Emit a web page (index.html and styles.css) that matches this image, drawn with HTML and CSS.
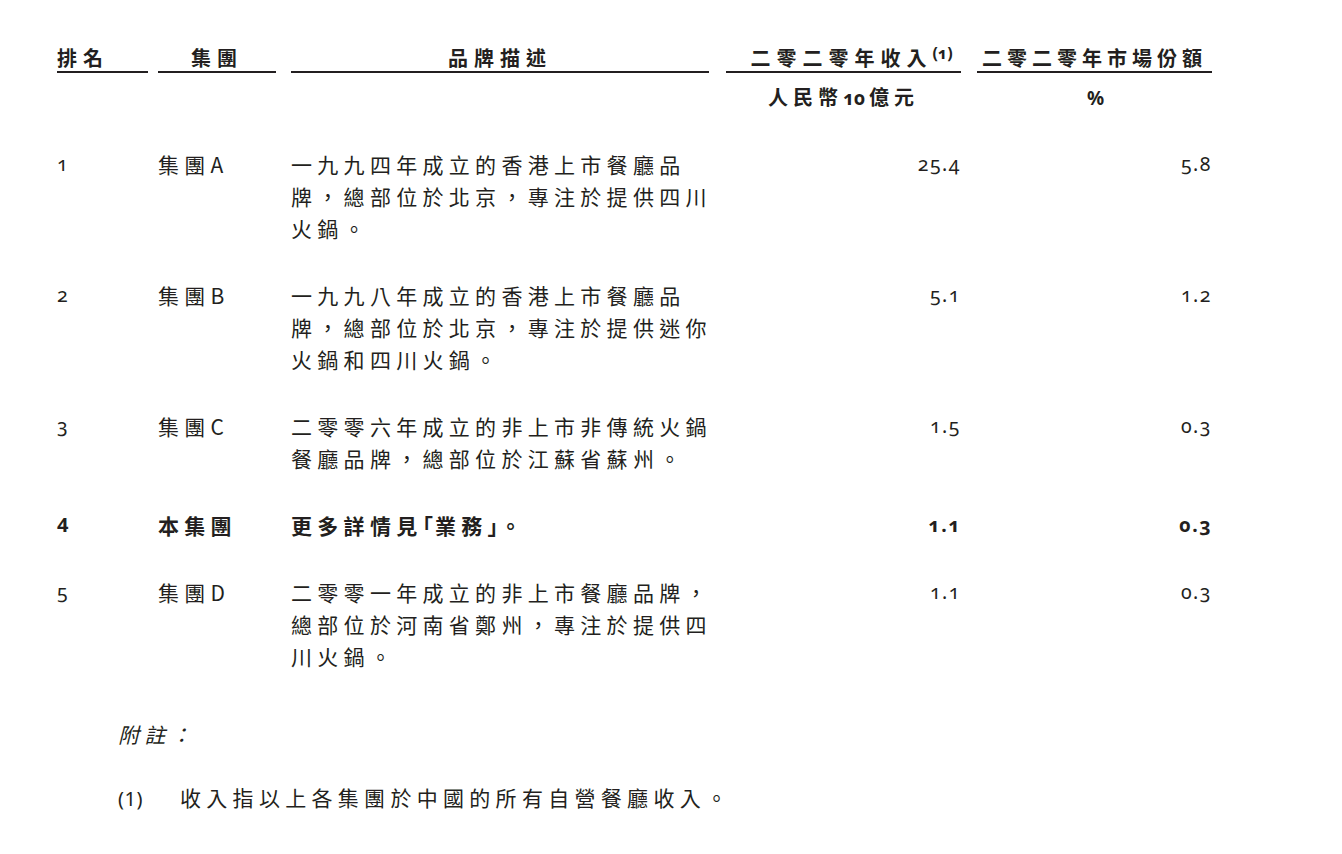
FILE: index.html
```html
<!DOCTYPE html>
<html lang="zh-Hant">
<head>
<meta charset="utf-8">
<title>市場份額</title>
<link rel="stylesheet" href="styles.css">
</head>
<body>
<div class="page">
  <div class="row head">
    <div class="hcell left r-rank"><span class="ul">排名</span></div>
    <div class="hcell r-group"><span class="ul">集團</span></div>
    <div class="hcell r-desc"><span class="ul">品牌描述</span></div>
    <div class="hcell r-rev"><span class="ul">二零二零年收入<sup class="sup">(1)</sup></span></div>
    <div class="hcell r-share"><span class="ul">二零二零年市場份額</span></div>
  </div>
  <div class="row sub">
    <div></div><div></div><div></div>
    <div class="hcell r-rev">人民幣<span class="num">10</span>億元</div>
    <div class="hcell r-share"><span class="num">%</span></div>
  </div>

  <div class="body">
    <div class="row item">
      <div class="num rank">1</div>
      <div class="cjk">集團A</div>
      <div class="cjk">一九九四年成立的香港上市餐廳品<br>牌，總部位於北京，專注於提供四川<br>火鍋。</div>
      <div class="num val">25.4</div>
      <div class="num val">5.8</div>
    </div>
    <div class="row item">
      <div class="num rank">2</div>
      <div class="cjk">集團B</div>
      <div class="cjk">一九九八年成立的香港上市餐廳品<br>牌，總部位於北京，專注於提供迷你<br>火鍋和四川火鍋。</div>
      <div class="num val">5.1</div>
      <div class="num val">1.2</div>
    </div>
    <div class="row item">
      <div class="num rank">3</div>
      <div class="cjk">集團C</div>
      <div class="cjk">二零零六年成立的非上市非傳統火鍋<br>餐廳品牌，總部位於江蘇省蘇州。</div>
      <div class="num val">1.5</div>
      <div class="num val">0.3</div>
    </div>
    <div class="row item bold">
      <div class="num rank">4</div>
      <div class="cjk">本集團</div>
      <div class="cjk">更多詳情見<span class="br">「</span>業務<span class="br">」</span>。</div>
      <div class="num val">1.1</div>
      <div class="num val">0.3</div>
    </div>
    <div class="row item">
      <div class="num rank">5</div>
      <div class="cjk">集團D</div>
      <div class="cjk">二零零一年成立的非上市餐廳品牌，<br>總部位於河南省鄭州，專注於提供四<br>川火鍋。</div>
      <div class="num val">1.1</div>
      <div class="num val">0.3</div>
    </div>
  </div>

  <div class="notes">
    <div class="note-title">附註：</div>
    <div class="note"><span class="note-no num">(1)</span><span class="cjk">收入指以上各集團於中國的所有自營餐廳收入。</span></div>
  </div>
</div>
</body>
</html>
```
FILE: styles.css
```css
html, body {
  margin: 0;
  padding: 0;
  background: #ffffff;
}
body {
  color: #231f20;
  font-family: "Noto Sans CJK TC", "Noto Sans CJK SC", sans-serif;
}
.page {
  padding: 45px 0 0 57px;
}
.row {
  display: grid;
  grid-template-columns: 101px 133px 435px 251px 235px;
  align-items: start;
}
.hcell {
  font-weight: 700;
  font-size: 20px;
  line-height: 26px;
  letter-spacing: 6px;
  text-align: center;
  white-space: nowrap;
}
.hcell.left { text-align: left; }
.head .hcell {
  border-bottom: 2px solid #231f20;
}
.head .r-rank { margin-right: 10px; }
.head .r-group { margin-right: 15px; }
.head .r-desc { margin-right: 17px; }
.head .r-rev { margin-right: 16px; padding-left: 16px; }
.head .r-share { letter-spacing: 5px; }
.ul { display: inline-block; }
.sup {
  font-family: "Noto Sans", sans-serif;
  font-variant-numeric: oldstyle-nums;
  font-size: 16px;
  letter-spacing: 0;
  vertical-align: 7px;
  line-height: 0;
}
.sub {
  margin-top: 8px;
}
.sub .hcell {
  line-height: 32px;
  letter-spacing: 5px;
}
.sub .r-rev { margin-right: 16px; }
.sub .r-share { padding-left: 6px; }
.sub .num {
  font-family: "Noto Sans", sans-serif;
  font-weight: 700;
  letter-spacing: 0;
  margin-right: 4px;
  font-size: 19px;
}
.body {
  display: flex;
  flex-direction: column;
  gap: 35px;
  margin-top: 34px;
}
.cjk {
  font-size: 21px;
  line-height: 32px;
  letter-spacing: 5.3px;
  font-weight: 400;
  white-space: nowrap;
}
.num {
  font-family: "Noto Sans", "Open Sans", sans-serif;
  font-variant-numeric: oldstyle-nums;
  font-size: 19.5px;
  line-height: 32px;
  letter-spacing: 1.5px;
}
.item .val {
  text-align: right;
}
.item .val:nth-child(4) { margin-right: 16px; }
.bold .cjk { font-weight: 700; }
.bold .num { font-weight: 700; }
.bold .rank {
  font-variant-numeric: lining-nums;
  font-size: 20px;
}
.br {
  font-feature-settings: "halt";
  letter-spacing: 2px;
}
.notes {
  margin-top: 46px;
  padding-left: 61px;
}
.note-title {
  font-size: 21px;
  line-height: 32px;
  letter-spacing: 5.3px;
  font-style: italic;
}
.note {
  margin-top: 31px;
  display: flex;
  align-items: baseline;
}
.note-no {
  width: 62px;
  letter-spacing: 0.5px;
  font-size: 20px;
  font-variant-numeric: lining-nums;
}
```
